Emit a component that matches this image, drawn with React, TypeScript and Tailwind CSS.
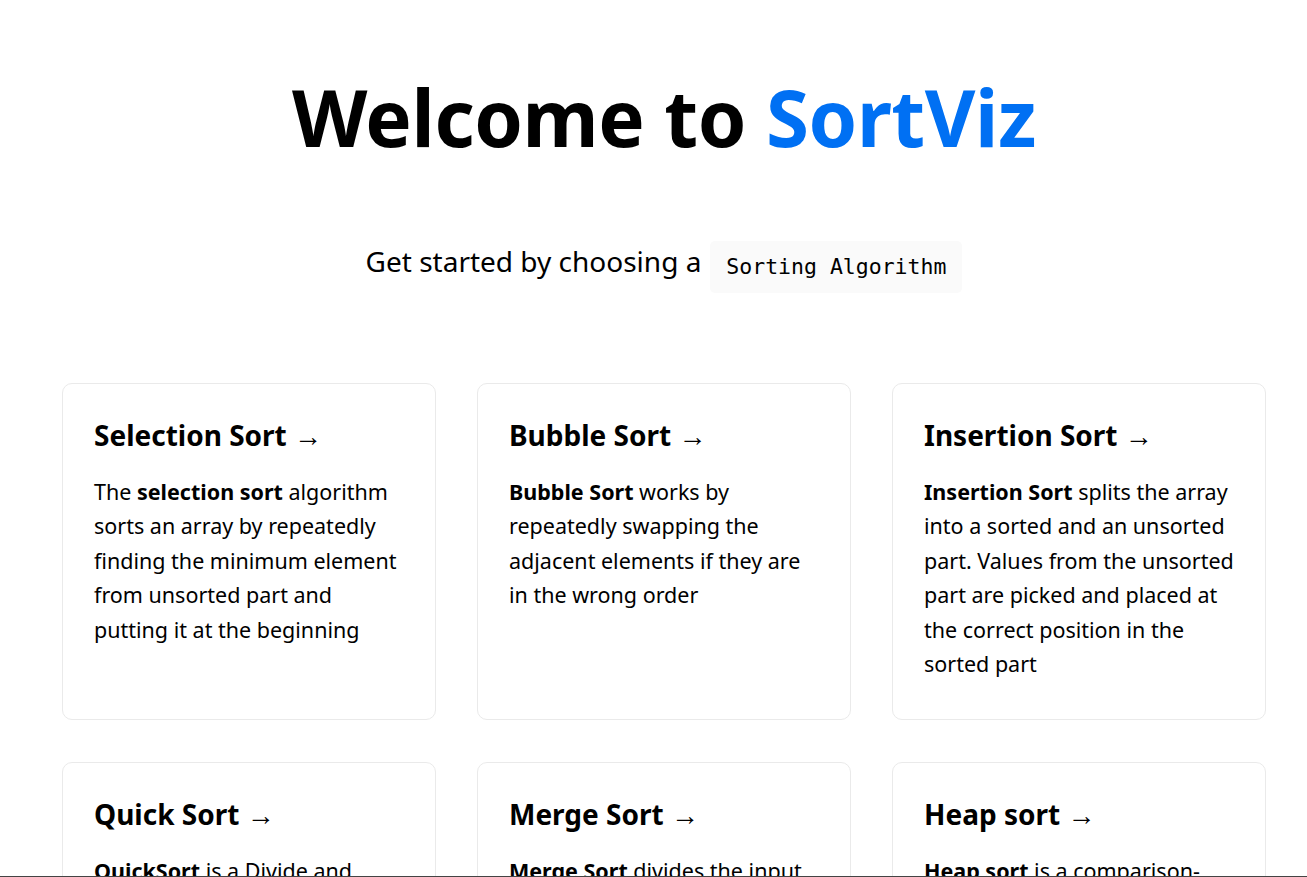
import React from 'react';

type Algo = {
  name: string;
  body: React.ReactNode;
};

const algos: Algo[] = [
  {
    name: 'Selection Sort',
    body: (
      <>
        The <b className="font-bold">selection sort</b> algorithm sorts an array by repeatedly finding the minimum element
        from unsorted part and putting it at the beginning
      </>
    ),
  },
  {
    name: 'Bubble Sort',
    body: (
      <>
        <b className="font-bold">Bubble Sort</b> works by repeatedly swapping the adjacent elements if they are in the
        wrong order
      </>
    ),
  },
  {
    name: 'Insertion Sort',
    body: (
      <>
        <b className="font-bold">Insertion Sort</b> splits the array into a sorted and an unsorted part. Values from the
        unsorted part are picked and placed at the correct position in the sorted part
      </>
    ),
  },
  {
    name: 'Quick Sort',
    body: (
      <>
        <b className="font-bold">QuickSort</b> is a Divide and Conquer algorithm. It picks an element as a pivot and
        partitions the given array around the picked pivot
      </>
    ),
  },
  {
    name: 'Merge Sort',
    body: (
      <>
        <b className="font-bold">Merge Sort</b> divides the input array into two halves, calls itself for the two halves,
        and then merges the two sorted halves
      </>
    ),
  },
  {
    name: 'Heap sort',
    body: (
      <>
        <b className="font-bold">Heap sort</b> is a comparison-based sorting technique based on Binary Heap data structure
      </>
    ),
  },
];

export default function App() {
  return (
    <div className="min-h-screen bg-white text-black font-['Noto_Sans',sans-serif]">
      <main className="flex flex-col items-center pl-[62px] pr-[41px] pt-[73px] pb-16">
        <h1 className="m-0 text-[78px] font-bold leading-[1.15] tracking-[-0.4px]">
          Welcome to <span className="text-[#0070f3]">SortViz</span>
        </h1>

        <p className="mt-[77px] mb-[90px] flex items-start text-[28px] leading-[42px]">
          Get started by choosing a
          <code className="ml-[9px] mt-px rounded-[5px] bg-[#fafafa] px-4 py-[10px] font-['DejaVu_Sans_Mono',monospace] text-[21.5px] leading-[32px]">
            Sorting Algorithm
          </code>
        </p>

        <div className="grid w-full grid-cols-3 gap-x-[41px] gap-y-[42px]">
          {algos.map((algo) => (
            <a
              key={algo.name}
              href="#"
              className="block h-[337px] rounded-[10px] border border-[#eaeaea] px-[31px] pt-[32px] pb-[32px] text-black"
            >
              <h2 className="mb-[20px] text-[28px] font-bold leading-[1.4]">
                {algo.name} <span className="font-normal">→</span>
              </h2>
              <p className="text-[21.5px] leading-[34.5px]">{algo.body}</p>
            </a>
          ))}
        </div>
      </main>
      <div className="fixed bottom-0 left-0 right-0 h-px bg-[#444]" />
    </div>
  );
}
